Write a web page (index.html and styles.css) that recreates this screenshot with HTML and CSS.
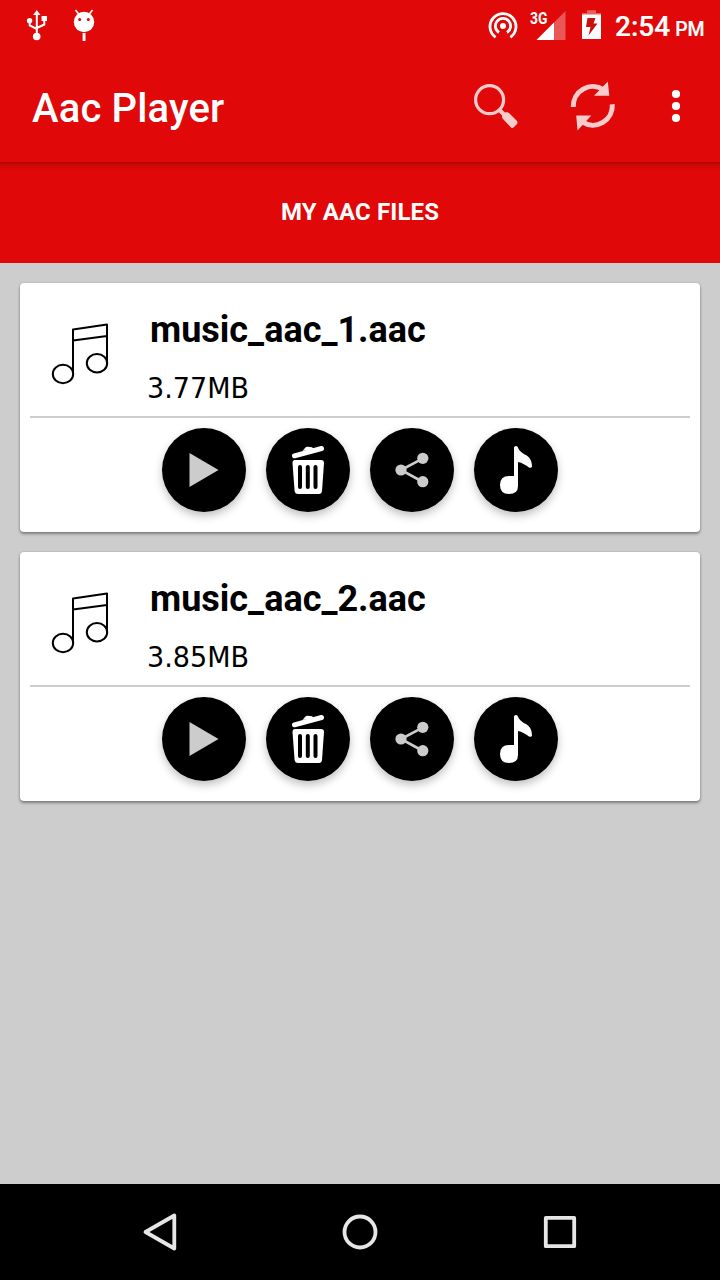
FILE: index.html
```html
<!DOCTYPE html>
<html lang="en">
<head>
<meta charset="utf-8">
<title>Aac Player</title>
<link rel="stylesheet" href="styles.css">
</head>
<body>
<svg class="defs" width="0" height="0" aria-hidden="true">
  <symbol id="notes" viewBox="50 320 60 68">
    <g fill="none" stroke="#000" stroke-width="2" stroke-linejoin="round">
      <path d="M73 374V329.500L107 324.500V364M73 340.500L107 336"/>
      <ellipse cx="63" cy="374" rx="10.200" ry="9.200"/>
      <ellipse cx="97" cy="363.300" rx="10.200" ry="9.200"/>
    </g>
  </symbol>
  <symbol id="play" viewBox="162 428 84 84"><path d="M189.500 453V487L218.500 470Z" fill="#ccc"/></symbol>
  <symbol id="trash" viewBox="266 428 84 84">
    <path d="M294.500 455.800L321.500 448.500" stroke="#fff" stroke-width="5" stroke-linecap="round"/>
    <path d="M302.500 451L305 448Q306 446.500 308 446.700L312 447.300L314 449Z" fill="#fff"/>
    <path d="M295 460H321Q324 460 324 463L322 491Q321.700 494 319 494H298Q295 494 294.600 491L292.500 463Q292.500 460 295 460Z" fill="#fff"/>
    <path d="M300 467V487M307.800 467V487M315.500 467V487" stroke="#000" stroke-width="4" stroke-linecap="round"/>
  </symbol>
  <symbol id="share" viewBox="370 428 84 84">
    <path d="M423 458.300L401 470L423 482" fill="none" stroke="#ccc" stroke-width="2.600"/>
    <g fill="#ccc"><circle cx="422.800" cy="458.300" r="5.600"/><circle cx="401" cy="470" r="5.600"/><circle cx="422.800" cy="481.700" r="5.600"/></g>
  </symbol>
  <symbol id="note" viewBox="474 428 84 84">
    <path d="M514 447.500Q514 446 516 446Q517.500 446 518 447.500C519 451 523 453.500 526 455C531 458 532 463 532 466.500Q531.500 468.500 529 467.500C526 465.500 522 462.500 518 462V486Q518 494 509 494Q500 494 500 485Q500 476 509 476H514Z" fill="#fff"/>
  </symbol>
</svg>

<div class="screen">
  <header class="top">
    <div class="status">
      <svg class="usb" width="22" height="32" viewBox="26 9 22 32">
        <g fill="none" stroke="#fff" stroke-width="2"><path d="M36.800 14V35M29.700 22V25.500L36.800 29M44.300 19V24.500L36.800 28"/></g>
        <path d="M36.800 10L40.500 15H33.100Z" fill="#fff"/><circle cx="29.600" cy="20.800" r="2.700" fill="#fff"/><path d="M41.600 16H47V21H41.600Z" fill="#fff"/><circle cx="36.700" cy="36.500" r="3.800" fill="#fff"/>
      </svg>
      <svg class="bug" width="22" height="32" viewBox="73 9 22 32">
        <path d="M75.500 10L79 14.500M92.500 10L89 14.500" stroke="#fff" stroke-width="1.700"/><circle cx="84" cy="22" r="10.200" fill="#fff"/><path d="M82.600 33H85.500V41H82.600Z" fill="#fff"/><g fill="#e00808"><circle cx="79.700" cy="19.600" r="1.500"/><circle cx="88.300" cy="19.600" r="1.500"/></g>
      </svg>
      <svg class="cast" width="32" height="32" viewBox="487 10 32 32">
        <circle cx="503" cy="26" r="3" fill="#fff"/>
        <path d="M499 32.500A7.600 7.600 0 1 1 507 32.500M495.600 37.300A13 13 0 1 1 510.400 37.300" fill="none" stroke="#fff" stroke-width="2.800"/>
      </svg>
      <div class="signal">
        <svg width="30" height="30" viewBox="536 11 30 30"><path d="M565.500 11V40H536.500Z" fill="#fff" opacity=".32"/><path d="M554 22.500V40H536.500Z" fill="#fff"/></svg>
        <span class="net">3G</span>
      </div>
      <svg class="battery" width="20" height="30" viewBox="582 10 20 30">
        <path d="M587 10.300H596V13H601V17H582V13H587Z" fill="#fff" opacity=".35"/><path d="M582 14.500H601V39H582Z" fill="#fff"/>
        <path d="M587.500 18H595.500L593.500 23.500H597.500L588.500 35.500L590.500 27H586Z" fill="#c9100f"/>
      </svg>
      <div class="clock">2:54<span class="meridiem">PM</span></div>
    </div>
    <div class="appbar">
      <h1 class="title">Aac Player</h1>
      <svg class="search" width="48" height="48" viewBox="472 82 48 48">
        <circle cx="489.600" cy="99.700" r="14" fill="none" stroke="#f9cccc" stroke-width="3.200"/>
        <path d="M499.500 110L504.500 115" stroke="#f9cccc" stroke-width="4"/><path d="M502 116.500L503 113L506.500 112.300Q508 112 509 113L517 121Q518 122.500 517 124L514 127Q512.500 128.500 511 127.500L503 119Q502 118 502 116.500Z" fill="#f9cccc"/>
      </svg>
      <svg class="refresh" width="48" height="52" viewBox="569 80 48 52">
        <path d="M573.300 107A19.500 19.500 0 0 1 603.500 89.800M612.300 104.300A19.500 19.500 0 0 1 582.500 122.200" fill="none" stroke="#f9cccc" stroke-width="5"/>
        <path d="M607.800 81.500L609.300 95.800H594ZM577.500 130.500L576.200 115.500H591.300Z" fill="#f9cccc"/>
      </svg>
      <svg class="more" width="10" height="34" viewBox="671 89 10 34"><g fill="#fff"><circle cx="676" cy="94" r="4.100"/><circle cx="676" cy="106" r="4.100"/><circle cx="676" cy="118" r="4.100"/></g></svg>
    </div>
    <div class="tab">MY AAC FILES</div>
  </header>

  <main class="list">
    <article class="card">
      <div class="info">
        <svg class="thumb" width="60" height="68"><use href="#notes"/></svg>
        <div><h2 class="name">music_aac_1.aac</h2><p class="size">3.77MB</p></div>
      </div>
      <div class="actions">
        <button class="fab" aria-label="Play"><svg width="84" height="84"><use href="#play"/></svg></button>
        <button class="fab" aria-label="Delete"><svg width="84" height="84"><use href="#trash"/></svg></button>
        <button class="fab" aria-label="Share"><svg width="84" height="84"><use href="#share"/></svg></button>
        <button class="fab" aria-label="Ringtone"><svg width="84" height="84"><use href="#note"/></svg></button>
      </div>
    </article>
    <article class="card">
      <div class="info">
        <svg class="thumb" width="60" height="68"><use href="#notes"/></svg>
        <div><h2 class="name">music_aac_2.aac</h2><p class="size">3.85MB</p></div>
      </div>
      <div class="actions">
        <button class="fab" aria-label="Play"><svg width="84" height="84"><use href="#play"/></svg></button>
        <button class="fab" aria-label="Delete"><svg width="84" height="84"><use href="#trash"/></svg></button>
        <button class="fab" aria-label="Share"><svg width="84" height="84"><use href="#share"/></svg></button>
        <button class="fab" aria-label="Ringtone"><svg width="84" height="84"><use href="#note"/></svg></button>
      </div>
    </article>
  </main>

  <nav class="navbar">
    <svg width="40" height="40" viewBox="140 1212 40 40"><path d="M174.300 1215.500V1248.500L145.500 1232Z" fill="none" stroke="#e6e6e6" stroke-width="3.800" stroke-linejoin="round"/></svg>
    <svg width="40" height="40" viewBox="340 1212 40 40"><circle cx="360" cy="1232" r="15.500" fill="none" stroke="#e6e6e6" stroke-width="3.800"/></svg>
    <svg width="40" height="40" viewBox="540 1212 40 40"><path d="M545.800 1217.800H574.200V1246.200H545.800Z" fill="none" stroke="#e6e6e6" stroke-width="3.800" stroke-linejoin="round"/></svg>
  </nav>
</div>
</body>
</html>
```
FILE: styles.css
```css
* { box-sizing: border-box; }
body { margin: 0; font-family: Roboto, "Liberation Sans", sans-serif; }
h1, h2, p { margin: 0; }
svg { display: block; flex: none; }
.defs { position: absolute; }

.screen { display: flex; flex-direction: column; width: 720px; height: 1280px; background: #cdcdcd; }
.top { background: #e00808; color: #fff; }

.status { display: flex; height: 48px; padding: 9px 0 0 26px; }
.bug { margin-left: 25px; }
.cast { margin: 1px 0 0 392px; }
.signal { position: relative; margin: 2px 0 0 17px; }
.net { position: absolute; left: -6px; top: -1px; font-size: 17px; line-height: 17px; font-weight: 700; transform: scaleX(.82); transform-origin: left; }
.battery { margin: 1px 0 0 16px; }
.clock { display: flex; align-items: baseline; margin: 1px 0 0 13px; font-size: 28px; line-height: 33px; font-weight: 500; white-space: nowrap; -webkit-text-stroke: .2px #fff; }
.meridiem { margin-left: 5px; font-size: 19.500px; }

.appbar { display: flex; height: 114px; padding-left: 32px; }
.title { width: 440px; padding-top: 37px; font-size: 40px; line-height: 48px; font-weight: 500; letter-spacing: .15px; }
.search { margin-top: 34px; }
.refresh { margin: 32px 0 0 49px; }
.more { margin: 41px 0 0 54px; }

.tab { height: 101px; padding-top: 1px; background: linear-gradient(#b00606, #ca0707 3px, #e00808 8px); font-size: 24px; line-height: 99px; font-weight: 700; letter-spacing: .12px; text-align: center; }

.list { flex: 1; display: flex; flex-direction: column; gap: 20px; padding: 20px; }
.card { height: 249px; padding: 0 10px; border-radius: 4px; background: #fff; box-shadow: 0 2px 3px rgba(0, 0, 0, .38), 0 0 2px rgba(0, 0, 0, .2); }
.info { display: flex; height: 135px; padding-left: 20px; border-bottom: 2px solid #cdcdcd; }
.thumb { margin: 37px 40px 0 0; }
.name { padding-top: 26px; font-size: 36px; line-height: 42px; font-weight: 700; }
.size { margin: 21px 0 0 -3px; font: 28px/34px "DejaVu Sans", sans-serif; transform: scaleX(.965); transform-origin: left; }
.actions { display: flex; justify-content: center; gap: 20px; padding-top: 10px; }
.fab { width: 84px; height: 84px; padding: 0; border: 0; border-radius: 50%; background: #000; box-shadow: 0 4px 8px rgba(0, 0, 0, .25); }

.navbar { display: flex; justify-content: center; align-items: center; gap: 160px; height: 96px; background: #000; }
```
